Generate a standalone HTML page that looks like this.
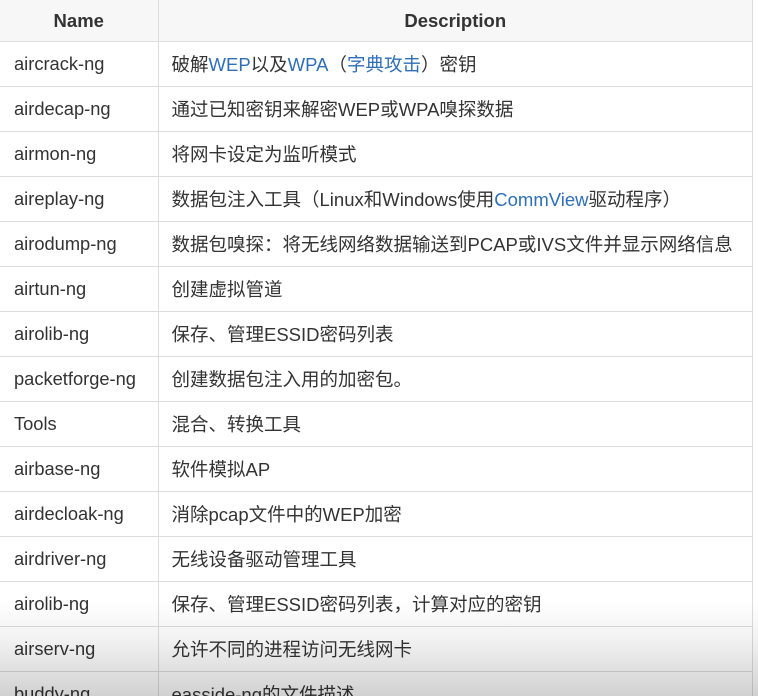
<!DOCTYPE html>
<html><head><meta charset="utf-8"><style>
html,body{margin:0;padding:0;width:758px;height:696px;overflow:hidden;background:#fff;}
body{font-family:"Liberation Sans","Noto Sans CJK SC",sans-serif;color:#333;font-size:18.5px;position:relative;}
table{position:absolute;left:0;top:-1px;border-collapse:collapse;width:753px;table-layout:fixed;}
td,th{height:44px;border:1px solid #ddd;padding:0 0 0 14px;vertical-align:middle;white-space:nowrap;overflow:hidden}
th{background:#f7f7f7;height:41px;font-weight:bold;text-align:center;padding:0;}
td:first-child{padding-left:14px;font-size:18.3px}
td+td{padding-left:13px}
tr td:first-child,tr th:first-child{border-left:none}
a{color:#2e6fb7;text-decoration:none}
.ov{position:absolute;left:0;right:0;top:600px;bottom:0;background:linear-gradient(rgba(0,0,0,0),rgba(0,0,0,0.05) 40%,rgba(0,0,0,0.18));pointer-events:none}
</style></head><body>
<table>
<colgroup><col style="width:158px"><col></colgroup>
<tr><th>Name</th><th>Description</th></tr>
<tr><td>aircrack-ng</td><td>破解<a>WEP</a>以及<a>WPA</a>（<a>字典攻击</a>）密钥</td></tr>
<tr><td>airdecap-ng</td><td>通过已知密钥来解密WEP或WPA嗅探数据</td></tr>
<tr><td>airmon-ng</td><td>将网卡设定为监听模式</td></tr>
<tr><td>aireplay-ng</td><td>数据包注入工具（Linux和Windows使用<a>CommView</a>驱动程序）</td></tr>
<tr><td>airodump-ng</td><td>数据包嗅探：将无线网络数据输送到PCAP或IVS文件并显示网络信息</td></tr>
<tr><td>airtun-ng</td><td>创建虚拟管道</td></tr>
<tr><td>airolib-ng</td><td>保存、管理ESSID密码列表</td></tr>
<tr><td>packetforge-ng</td><td>创建数据包注入用的加密包。</td></tr>
<tr><td>Tools</td><td>混合、转换工具</td></tr>
<tr><td>airbase-ng</td><td>软件模拟AP</td></tr>
<tr><td>airdecloak-ng</td><td>消除pcap文件中的WEP加密</td></tr>
<tr><td>airdriver-ng</td><td>无线设备驱动管理工具</td></tr>
<tr><td>airolib-ng</td><td>保存、管理ESSID密码列表，计算对应的密钥</td></tr>
<tr><td>airserv-ng</td><td>允许不同的进程访问无线网卡</td></tr>
<tr><td>buddy-ng</td><td>easside-ng的文件描述</td></tr>
</table>
<div class="ov"></div>
</body></html>
